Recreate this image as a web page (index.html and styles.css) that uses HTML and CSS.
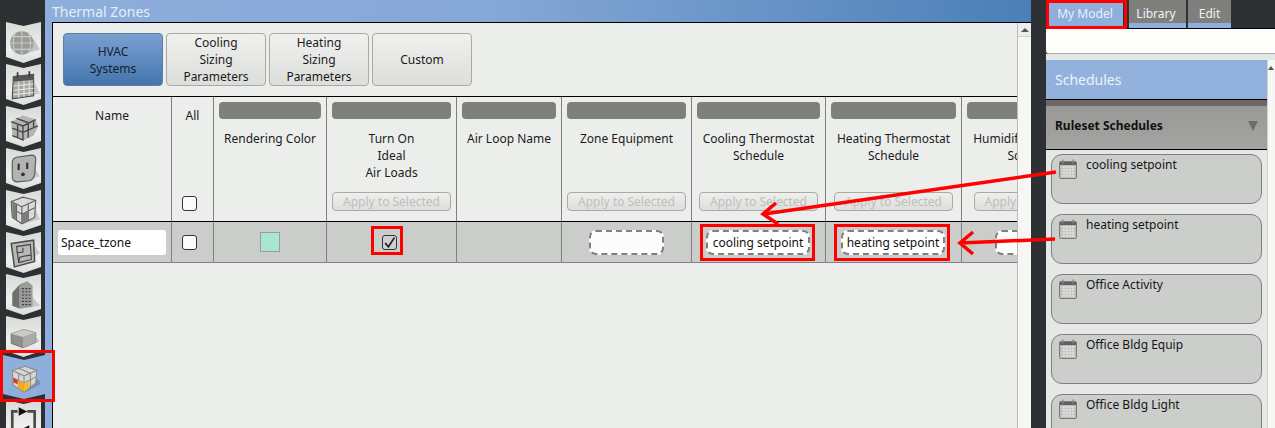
FILE: index.html
```html
<!DOCTYPE html>
<html lang="en">
<head>
<meta charset="utf-8">
<title>Thermal Zones</title>
<link rel="stylesheet" href="styles.css">
</head>
<body>
<svg class="defs" width="0" height="0" aria-hidden="true">
  <symbol id="cal" viewBox="0 0 18 20">
    <rect x="0.5" y="2.500" width="17" height="17" rx="1" fill="#b9bbb8" stroke="#7c7d7b"/>
    <rect x="1" y="3" width="16" height="3" fill="#5f605e"/>
    <rect x="3" y="0.500" width="1.500" height="4" fill="#888"/>
    <rect x="13.500" y="0.500" width="1.500" height="4" fill="#888"/>
    <path d="M2 8h14M2 11h14M2 14h14M2 17h14M5 7v11M8 7v11M11 7v11M14 7v11" stroke="#eceeec" stroke-width=".8" fill="none"/>
  </symbol>
</svg>
<div class="app">
  <nav class="rail">
    <div class="tab"><svg class="tab-icon" viewBox="0 0 30 28"><path d="M16 24 L30 20 L24 10 Z" fill="#c3c5c2"/><circle cx="13" cy="14" r="11" fill="#9a9c99"/><path d="M2 14h22M4 8h18M4 20h18M13 3v22M7 4c-3 6-3 14 0 20M19 4c3 6 3 14 0 20" stroke="#c9cbc8" fill="none"/></svg></div>
    <div class="tab"><svg class="tab-icon" viewBox="0 0 30 28"><path d="M22 6 L30 22 L6 27 Z" fill="#c9cbc8"/><path d="M5 6 L24 4 L24 24 L4 27 Z" fill="#a6a8a5" stroke="#4a4b4a"/><path d="M5 6 L24 4 L24 9 L5 11 Z" fill="#565755"/><path d="M5 15l19-2M5 19l19-2M5 23l19-2M10 11v15M15 10v15M20 10v14" stroke="#e4e6e3" fill="none"/><path d="M9 2v5M20 1v5" stroke="#333" stroke-width="1.500"/></svg></div>
    <div class="tab"><svg class="tab-icon" viewBox="0 0 30 28"><path d="M3 9 L14 3 L26 7 L28 14 L24 22 L14 27 L4 22 Z" fill="#b4b6b3"/><path d="M3 9 L14 13 L26 7M4 15 L14 19 L28 13M4 22 L14 26M14 13v14M9 11v6M19 11v7M9 18v6M19 18v6M8 6l11 4M24 9v6" stroke="#454645" stroke-width="1.300" fill="none"/></svg></div>
    <div class="tab"><svg class="tab-icon" viewBox="0 0 30 28"><path d="M22 8 L30 21 L8 27 Z" fill="#c9cbc8"/><path d="M8 3 L22 1 Q26 1 26 5 L25 19 Q24 24 20 25 L9 26 Q4 26 4 21 L4 8 Q4 4 8 3 Z" fill="#b2b4b1" stroke="#5c5d5c" stroke-width="1.100"/><rect x="9" y="9" width="2" height="6" fill="#333"/><rect x="17" y="8" width="2" height="6" fill="#333"/><circle cx="14" cy="19" r="1.800" fill="#333"/></svg></div>
    <div class="tab"><svg class="tab-icon" viewBox="0 0 30 28"><path d="M24 8 L30 22 L12 27 Z" fill="#c9cbc8"/><path d="M3 5 L14 1 L26 4 L25 20 L13 26 L4 20 Z" fill="#d9dbd8" stroke="#5c5d5c"/><path d="M3 5l10 5 13-6M13 10v16M8 7.500v15.500M19 8v15M4 12l9 5 12-6" stroke="#5c5d5c" fill="none"/><path d="M4 6l4 2v15l-4-3zM13 17l6-3v9l-6 3z" fill="#7c7e7b"/></svg></div>
    <div class="tab"><svg class="tab-icon" viewBox="0 0 30 28"><path d="M24 6 L30 14 L9 27 Z" fill="#c9cbc8"/><path d="M3 5 L24 2 L25 22 L6 27 Z" fill="#b7b9b6" stroke="#4a4b4a" stroke-width="1.400"/><path d="M8 8l13-2 1 14-12 3zM8 14l6-1v-4M14 17l8-1M10 23l1-5 4-1" stroke="#3f403f" fill="none"/></svg></div>
    <div class="tab"><svg class="tab-icon" viewBox="0 0 30 28"><path d="M20 12 L30 24 L12 27 Z" fill="#c9cbc8"/><path d="M4 12 L11 4 L11 27 L4 24 Z" fill="#6f716e"/><path d="M11 4 L18 1 L23 5 L23 25 L11 27 Z" fill="#9a9c99"/><path d="M13 8h8M13 11h8M13 14h8M13 17h8M13 20h8M13 23h8" stroke="#3f403f" stroke-dasharray="2 1.200" fill="none"/></svg></div>
    <div class="tab"><svg class="tab-icon" viewBox="0 0 30 28"><path d="M24 12 L30 18 L16 24 Z" fill="#c9cbc8"/><path d="M3 11 L15 7 L26 10 L26 19 L14 24 L3 20 Z" fill="#8f918e" stroke="#6b6c6a" stroke-width=".8"/><path d="M3 11 L15 7 L26 10 L14 14 Z" fill="#c9cbc8"/><path d="M14 14 L26 10 L26 19 L14 24 Z" fill="#aaaca9"/></svg></div>
    <div class="tab tab-active"><svg class="tab-icon" viewBox="0 0 30 28"><path d="M24 10 L32 18 L15 27 Z" fill="#7c90a8"/><path d="M4 6 L16 2 L27 6 L26 18 L15 26 L5 20 Z" fill="#d5d7d4" stroke="#8a8b89"/><path d="M4 6l11 5 12-5M15 11v15M10 4l11 4.500M10 8.500v14M21 8.500v13M5 13l10 5 11-6" stroke="#8a8b89" fill="none"/><path d="M8 15l7 3v8l-5-3z" fill="#f6a623"/><path d="M15 18l5-2v6l-5 4z" fill="#fbb92e"/><path d="M5 13l4 2v4l-4-2z" fill="#d43a2a"/></svg></div>
    <div class="tab"><svg class="tab-icon" viewBox="0 0 30 28"><path d="M9 5 H4 V22 H10 M18 5 H25 V22 H18" fill="none" stroke="#4a4b4a" stroke-width="2.500"/><path d="M10 1 L18 5 L10 9 Z" fill="#111"/><path d="M20 18 L12 22 L20 26 Z" fill="#111"/></svg></div>
  </nav>

  <main class="content">
    <header class="title">Thermal Zones</header>
    <div class="pane">
      <div class="work">
        <div class="subtabs">
          <div class="subtab subtab-on">HVAC<br>Systems</div>
          <div class="subtab">Cooling<br>Sizing<br>Parameters</div>
          <div class="subtab">Heating<br>Sizing<br>Parameters</div>
          <div class="subtab">Custom</div>
        </div>
        <div class="grid">
          <div class="hcell hplain">Name</div>
          <div class="hcell hplain">All<span class="check check-bottom check-shift"></span></div>
          <div class="hcell"><div class="hbar"></div><div class="hlabel">Rendering Color</div></div>
          <div class="hcell"><div class="hbar"></div><div class="hlabel">Turn On<br>Ideal<br>Air Loads</div><div class="apply">Apply to Selected</div></div>
          <div class="hcell"><div class="hbar"></div><div class="hlabel">Air Loop Name</div></div>
          <div class="hcell"><div class="hbar"></div><div class="hlabel">Zone Equipment</div><div class="apply">Apply to Selected</div></div>
          <div class="hcell"><div class="hbar"></div><div class="hlabel">Cooling Thermostat<br>Schedule</div><div class="apply">Apply to Selected</div></div>
          <div class="hcell"><div class="hbar"></div><div class="hlabel">Heating Thermostat<br>Schedule</div><div class="apply">Apply to Selected</div></div>
          <div class="hcell hlast"><div class="hbar"></div><div class="hlabel">Humidifying Setpoint<br>Schedule</div><div class="apply">Apply to Selected</div></div>

          <div class="dcell dname"><div class="nameinput">Space_tzone</div></div>
          <div class="dcell"><span class="check check-shift"></span></div>
          <div class="dcell"><span class="swatch"></span></div>
          <div class="dcell"><span class="check check-on"><svg class="tick" viewBox="0 0 12 12"><path d="M2 6.500 L5 10 L10.500 1.500" fill="none" stroke="#222" stroke-width="1.600"/></svg></span></div>
          <div class="dcell"></div>
          <div class="dcell"><div class="drop drop-empty"></div></div>
          <div class="dcell"><div class="drop">cooling setpoint</div></div>
          <div class="dcell"><div class="drop">heating setpoint</div></div>
          <div class="dcell hlast"><div class="drop drop-empty"></div></div>
        </div>
      </div>
      <div class="vscroll"><div class="vscroll-btn"><span class="arrow-up"></span></div></div>
    </div>
  </main>

  <div class="gutter"></div>

  <aside class="side">
    <div class="sidetabs">
      <div class="stab stab-on">My Model</div>
      <div class="stab stab-lib">Library</div>
      <div class="stab stab-edit">Edit</div>
    </div>
    <div class="sidesearch"></div>
    <div class="sidebody">
      <div class="sidemain">
        <div class="sidehead">Schedules</div>
        <div class="sideshade"></div>
        <div class="sidegroup"><b>Ruleset Schedules</b><span class="arrow-down"></span></div>
        <div class="sidelist">
          <div class="item"><svg class="cal"><use href="#cal"/></svg>cooling setpoint</div>
          <div class="item"><svg class="cal"><use href="#cal"/></svg>heating setpoint</div>
          <div class="item"><svg class="cal"><use href="#cal"/></svg>Office Activity</div>
          <div class="item"><svg class="cal"><use href="#cal"/></svg>Office Bldg Equip</div>
          <div class="item"><svg class="cal"><use href="#cal"/></svg>Office Bldg Light</div>
        </div>
      </div>
      <div class="sidescroll"><span class="arrow-up arrow-small"></span></div>
    </div>
  </aside>

  <svg class="callouts" viewBox="0 0 1275 428" aria-hidden="true">
    <g fill="none" stroke="#f00" stroke-width="3">
      <rect x="1.500" y="351.500" width="52" height="49"/>
      <rect x="372.500" y="227.500" width="29" height="26"/>
      <rect x="701.500" y="225.500" width="112" height="34"/>
      <rect x="835.500" y="225.500" width="113" height="34"/>
      <rect x="1047.500" y="1.500" width="78" height="26"/>
    </g>
    <path d="M1056 172 L764 214 M776 203 L763 214 L778 224" fill="none" stroke="#f00" stroke-width="3.500"/>
    <path d="M1055 239 L960 243 M973 232 L960 243 L973 254" fill="none" stroke="#f00" stroke-width="3.500"/>
  </svg>
</div>
</body>
</html>
```
FILE: styles.css
```css
* { box-sizing: border-box; }
html, body { margin: 0; padding: 0; height: 100%; }
body { font: 12px/17px "Noto Sans", "Open Sans", sans-serif; color: #1b1b1b; overflow: hidden; background: #2e3134; }
.defs { position: absolute; }
.app { position: relative; display: flex; width: 1275px; height: 428px; overflow: hidden; background: #2e3134; }

/* left rail */
.rail { flex: 0 0 45px; display: flex; flex-direction: column; gap: 1px; padding: 22px 0 0 6px; background: #2e3134; }
.tab { flex: 0 0 41px; width: 35px; padding: 6px 0 0 2px; background: linear-gradient(#d8dad7, #f0f1ef 65%, #dcdedb);
  clip-path: polygon(0 0, 50% 4px, 100% 0, 100% 35px, 50% 100%, 0 35px); }
.tab-icon { display: block; width: 32px; height: 30px; filter: blur(.4px); }
.tab-active { flex-basis: 44px; width: 42px; margin-top: -3px; margin-left: -3px; padding: 9px 0 0 5px; background: #8eaedc;
  clip-path: polygon(0 0, 50% 5px, 100% 0, 100% 39px, 50% 100%, 0 39px); }

/* centre */
.content { flex: 0 0 986px; display: flex; flex-direction: column; background: #8eaedc; }
.title { flex: 0 0 22px; min-height: 0; height: 22px; overflow: hidden; padding-left: 7px; font-size: 14px; line-height: 23px; color: #e6edf6;
  background: linear-gradient(90deg, #8eaedc, #86a8d6 45%, #4b7fb7); }
.pane { flex: 1; display: flex; margin-left: 7px; min-height: 0; background: #eceeec; border-top: 1px solid #000; border-left: 1px solid #000; }
.work { flex: 0 0 964px; overflow: hidden; }
.subtabs { display: flex; gap: 3px; height: 73px; padding: 10px 0 10px 10px; }
.subtab { flex: 0 0 100px; display: flex; align-items: center; justify-content: center; text-align: center; border: 1px solid #a9aaa8; border-radius: 4px; background: linear-gradient(#f0f1ef, #dcdedb); }
.subtab-on { background: linear-gradient(#7ba0d2, #4475ad); border-color: #5f7e9f; color: #14202c; }

.grid { display: grid; width: 1050px; grid-template-columns: 119px 42px 113px 130px 105px 130px 134px 136px 142px; grid-template-rows: 125px 41px; border-top: 1px solid #000; }
.hcell { display: flex; flex-direction: column; align-items: center; height: 125px; border-right: 1px solid #808080; border-bottom: 1px solid #000; padding: 5px 5px 0; text-align: center; }
.hplain { padding-top: 10px; }
.hlast { border-right: 0; }
.hbar { flex: 0 0 17px; width: 100%; background: #7e807c; border-radius: 4px; }
.hlabel { margin-top: 11px; white-space: nowrap; }
.apply { margin-top: auto; margin-bottom: 10px; width: 119px; height: 19px; line-height: 17px; font-size: 12px; color: #bdbfbc; background: linear-gradient(#eff0ee, #dcdedb); border: 1px solid #a9aaa8; border-radius: 4px; white-space: nowrap; }
.check { display: block; flex: none; width: 15px; height: 15px; background: #fbfbfb; border: 1px solid #333; border-radius: 3px; position: relative; }
.check-bottom { margin-top: auto; margin-bottom: 10px; }
.check-shift { margin-right: 6px; }
.dcell { display: flex; align-items: center; justify-content: center; height: 41px; background: #cbcdca; border-right: 1px solid #808080; border-bottom: 1px solid #808080; }
.dname { justify-content: flex-start; padding-left: 5px; }
.nameinput { width: 108px; height: 25px; padding-left: 3px; line-height: 25px; font-size: 12px; color: #111; background: #fff; border-radius: 3px; }
.swatch { width: 20px; height: 20px; background: #a9e5d5; border: 1px solid #9b9d9a; }
.check-on { background: #cfd1ce; margin-right: 4px; }
.tick { position: absolute; left: 0; top: 0; width: 13px; height: 13px; }
.drop { display: flex; align-items: center; justify-content: center; height: 25px; width: 104px; margin-right: 1px; color: #111; background: #fff; border: 2px dashed #808080; border-radius: 7px; }
.drop-empty { width: 75px; margin-right: 0; background: #fcfcfa; }
.vscroll { flex: 0 0 14px; background: #f6f7f5; border-left: 1px solid #b9bbb8; }
.vscroll-btn { display: flex; justify-content: center; padding-top: 5px; height: 14px; background: #eceeec; border-bottom: 1px solid #cfd1ce; }
.arrow-up { width: 0; height: 0; border-left: 4px solid transparent; border-right: 4px solid transparent; border-bottom: 4px solid #555; }

.gutter { flex: 0 0 15px; background: #2e3134; }

/* right panel */
.side { flex: 0 0 229px; display: flex; flex-direction: column; min-width: 0; }
.sidetabs { display: flex; flex: 0 0 29px; gap: 2px; padding-left: 1px; background: #2e3134; border-bottom: 1px solid #000; }
.stab { text-align: center; line-height: 27px; color: #eef2f6; background: #7f807c; box-shadow: inset 0 -5px 0 #8eaedc; }
.stab-on { width: 76px; margin-right: 4px; background: #8eaedc; box-shadow: none; color: #e9f0f9; }
.stab-lib { width: 57px; padding-right: 3px; }
.stab-edit { width: 43px; }
.sidesearch { flex: 0 0 25px; background: #fdfdfb; border-bottom: 1px solid #a9aaa8; border-radius: 0 0 0 3px; }
.sidebody { flex: 1; display: flex; min-height: 0; padding-top: 6px; background: #e6e8e5; }
.sidemain { flex: 0 0 221px; display: flex; flex-direction: column; min-height: 0; }
.sidehead { flex: 0 0 39px; padding-left: 9px; font-size: 14px; line-height: 39px; color: #eef3fa; background: #92b2dd; }
.sideshade { flex: 0 0 7px; background: #6c6868; border-top: 1px solid #000; }
.sidegroup { display: flex; flex: 0 0 44px; align-items: center; justify-content: space-between; padding: 0 9px 4px; background: linear-gradient(#999a97, #a3a4a1); border-bottom: 1px solid #000; color: #111; }
.arrow-down { width: 0; height: 0; border-left: 5.500px solid transparent; border-right: 5.500px solid transparent; border-top: 10px solid #6d6e6b; }
.sidelist { display: flex; flex-direction: column; gap: 10px; padding: 4px 5px 0; background: #e6e8e5; flex: 1; }
.item { display: flex; flex: 0 0 50px; align-items: flex-start; gap: 9px; padding: 1px 0 0 7px; background: #cccecb; border: 1px solid #808080; border-radius: 11px; color: #161616; }
.cal { flex: none; width: 18px; height: 20px; margin-top: 3px; }
.sidescroll { flex: 0 0 8px; display: flex; justify-content: flex-start; padding-top: 6px; background: #f7f8f6; border-left: 1px solid #cfd1ce; }
.arrow-small { border-left-width: 3.500px; border-right-width: 3.500px; }

.callouts { position: absolute; left: 0; top: 0; width: 1275px; height: 428px; pointer-events: none; }
```
